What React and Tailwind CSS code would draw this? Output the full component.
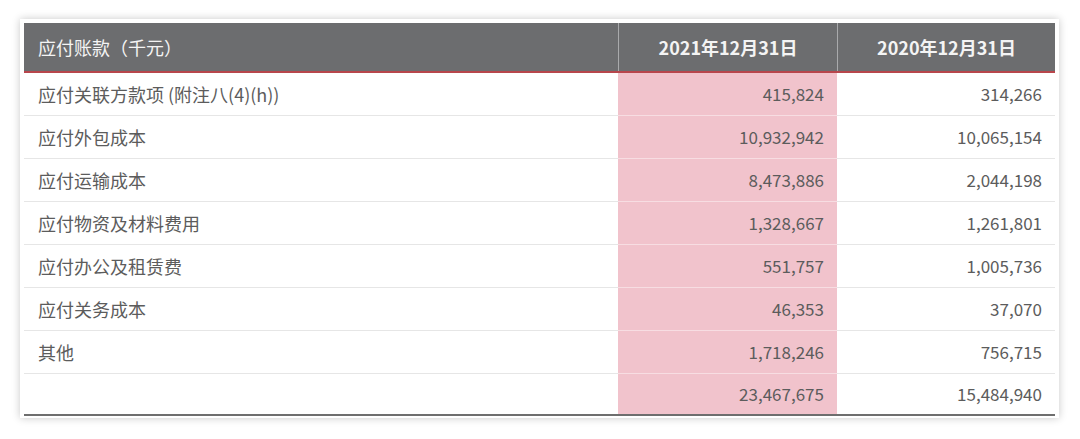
import React from "react";

const rows = [
  { name: "应付关联方款项 (附注八(4)(h))", a: "415,824", b: "314,266" },
  { name: "应付外包成本", a: "10,932,942", b: "10,065,154" },
  { name: "应付运输成本", a: "8,473,886", b: "2,044,198" },
  { name: "应付物资及材料费用", a: "1,328,667", b: "1,261,801" },
  { name: "应付办公及租赁费", a: "551,757", b: "1,005,736" },
  { name: "应付关务成本", a: "46,353", b: "37,070" },
  { name: "其他", a: "1,718,246", b: "756,715" },
];

const App = () => {
  return (
    <div
      className="w-[1080px] h-[439px] bg-white pt-[19px] pl-[20px]"
      style={{ fontFamily: '"Noto Sans CJK SC", "Noto Sans", sans-serif' }}
    >
      <div className="w-[1039px] bg-white p-[4px] pb-[2px] shadow-[0_0_8px_rgba(0,0,0,0.22)]">
        <div className="grid grid-cols-[594px_219px_218px] h-[50px] bg-[#6c6d6f] border-b-2 border-[#b8464c] text-[18px] text-[#f4f4f4]">
          <div className="flex items-center pl-[14px]">应付账款（千元）</div>
          <div className="flex items-center justify-center font-bold border-l border-[#a9aaac]">2021年12月31日</div>
          <div className="flex items-center justify-center font-bold border-l border-[#a9aaac]">2020年12月31日</div>
        </div>
        {rows.map((row) => (
          <div
            key={row.name}
            className="grid grid-cols-[594px_219px_218px] h-[43px] text-[17px] text-[#5c5c5c]"
          >
            <div className="flex items-center pl-[14px] text-[18px] border-b border-[#e6e6e6]">{row.name}</div>
            <div className="flex items-center justify-end pr-[13px] bg-[#f1c3cc] border-b border-[#f7dde2]">{row.a}</div>
            <div className="flex items-center justify-end pr-[13px] border-b border-[#e6e6e6]">{row.b}</div>
          </div>
        ))}
        <div className="grid grid-cols-[594px_219px_218px] h-[42px] text-[17px] text-[#5c5c5c] border-b-2 border-[#6e6e6e]">
          <div></div>
          <div className="flex items-center justify-end pr-[13px] bg-[#f1c3cc]">23,467,675</div>
          <div className="flex items-center justify-end pr-[13px]">15,484,940</div>
        </div>
      </div>
    </div>
  );
};

export default App;
